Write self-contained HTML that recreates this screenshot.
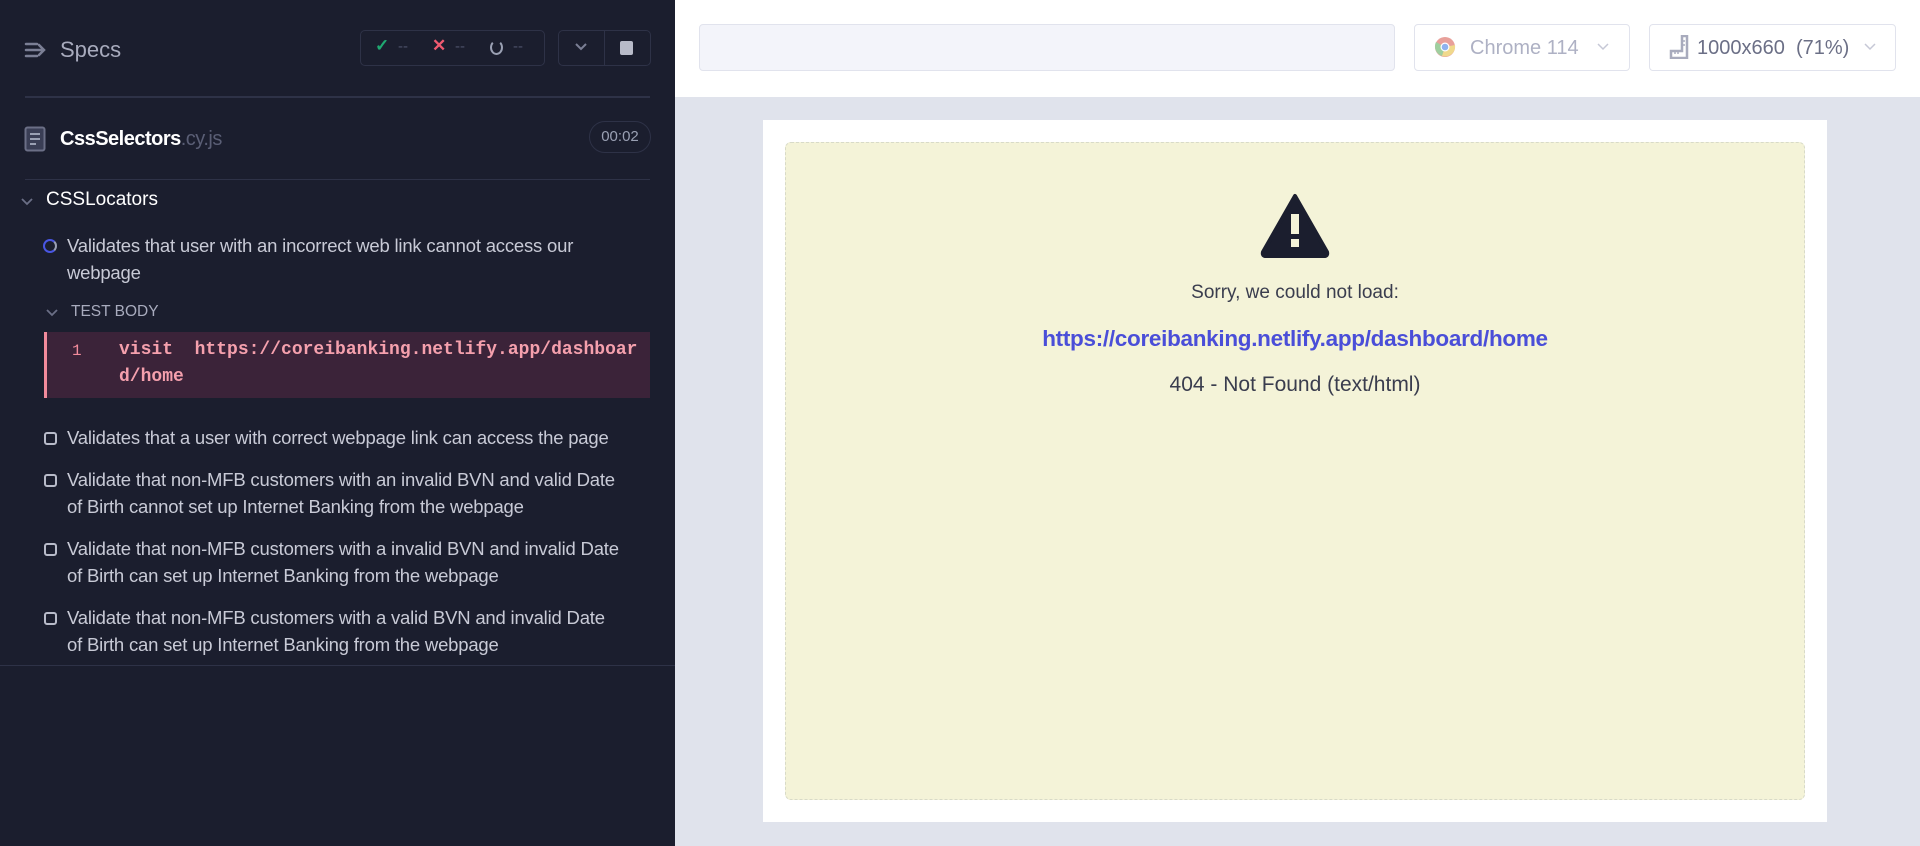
<!DOCTYPE html>
<html><head><meta charset="utf-8"><style>
*{margin:0;padding:0;box-sizing:border-box}
body{width:1920px;height:846px;overflow:hidden;font-family:"Liberation Sans",sans-serif;background:#e0e3ec;position:relative}
.a{position:absolute;white-space:nowrap}
#left{position:absolute;left:0;top:0;width:675px;height:846px;background:#1b1e2e}
.t{color:#c8cad6;font-size:18.5px;line-height:27px;letter-spacing:-0.2px}
.cb{position:absolute;width:13px;height:13px;border:2.5px solid #b8bbc9;border-radius:3px;left:44px}
</style></head><body>
<div id="left">
  <svg class="a" style="left:24px;top:41px" width="24" height="18" viewBox="0 0 24 18"><g stroke="#7b7f95" stroke-width="2.5" fill="none" stroke-linecap="round"><path d="M2 3h11M2 9h15M2 15h11M15 4l5 5-5 5"/></g></svg>
  <div class="a" style="left:60px;top:37px;font-size:22px;color:#a8abbd">Specs</div>
  <div class="a" style="left:360px;top:30px;width:185px;height:36px;border:1px solid #2e3247;border-radius:5px"></div>
  <div class="a" style="left:375px;top:36px;font-size:17px;color:#1fa971;font-weight:bold">✓</div>
  <div class="a" style="left:398px;top:38px;font-size:15px;color:#4e526a">--</div>
  <div class="a" style="left:432px;top:36px;font-size:17px;color:#f05a70;font-weight:bold">✕</div>
  <div class="a" style="left:455px;top:38px;font-size:15px;color:#4e526a">--</div>
  <div class="a" style="left:490px;top:40px;width:13px;height:15px;border:2.5px solid #9aa0b3;border-radius:50%;border-top-color:transparent"></div>
  <div class="a" style="left:513px;top:38px;font-size:15px;color:#4e526a">--</div>
  <div class="a" style="left:558px;top:30px;width:93px;height:36px;border:1px solid #2e3247;border-radius:5px"></div>
  <div class="a" style="left:604px;top:31px;width:1px;height:34px;background:#2e3247"></div>
  <svg class="a" style="left:574px;top:42px" width="14" height="10"><path d="M2 2l5 5 5-5" stroke="#7b7f95" stroke-width="2" fill="none"/></svg>
  <div class="a" style="left:620px;top:41px;width:13px;height:14px;background:#b8bbc9;border-radius:2px"></div>
  <div class="a" style="left:25px;top:96px;width:625px;height:2px;background:#2e3247"></div>
  <svg class="a" style="left:24px;top:126px" width="22" height="26" viewBox="0 0 22 26"><rect x="1.5" y="1.5" width="19" height="23" rx="2" fill="#3a3e55" stroke="#6b6f86" stroke-width="2"/><path d="M6 8h10M6 13h10M6 18h6" stroke="#9aa0b3" stroke-width="2"/></svg>
  <div class="a" style="left:60px;top:128px;font-size:20px;color:#fff;font-weight:bold;letter-spacing:-0.5px">CssSelectors<span style="font-weight:normal;color:#5a5e75">.cy.js</span></div>
  <div class="a" style="left:589px;top:121px;width:62px;height:32px;border:1px solid #2e3247;border-radius:16px;color:#9aa0b3;font-size:15px;text-align:center;line-height:30px">00:02</div>
  <div class="a" style="left:25px;top:179px;width:625px;height:1px;background:#2e3247"></div>
  <svg class="a" style="left:21px;top:198px" width="12" height="8"><path d="M1 1l5 5 5-5" stroke="#6b6f86" stroke-width="1.8" fill="none"/></svg>
  <div class="a" style="left:46px;top:189px;font-size:19px;color:#fff">CSSLocators</div>
  <div class="a" style="left:43px;top:239px;width:14px;height:14px;border:2.5px solid #4956e3;border-radius:50%;border-right-color:#9aa0b3"></div>
  <div class="a t" style="left:67px;top:232px">Validates that user with an incorrect web link cannot access our<br>webpage</div>
  <svg class="a" style="left:46px;top:309px" width="12" height="8"><path d="M1 1l5 5 5-5" stroke="#6b6f86" stroke-width="1.8" fill="none"/></svg>
  <div class="a" style="left:71px;top:303px;font-size:15.5px;color:#a8abbd">TEST BODY</div>
  <div class="a" style="left:44px;top:332px;width:606px;height:66px;background:#3b2339;border-left:3px solid #f28b9c"></div>
  <div class="a" style="left:72px;top:338px;font-family:'Liberation Mono',monospace;font-size:16px;color:#f28b9c;line-height:27px">1</div>
  <div class="a" style="left:119px;top:337px;font-family:'Liberation Mono',monospace;font-size:18px;font-weight:bold;color:#f5a0ad;line-height:27px">visit&nbsp;&nbsp;https://coreibanking.netlify.app/dashboar<br>d/home</div>
  <div class="cb" style="top:432px"></div>
  <div class="a t" style="left:67px;top:424px">Validates that a user with correct webpage link can access the page</div>
  <div class="cb" style="top:474px"></div>
  <div class="a t" style="left:67px;top:466px">Validate that non-MFB customers with an invalid BVN and valid Date<br>of Birth cannot set up Internet Banking from the webpage</div>
  <div class="cb" style="top:543px"></div>
  <div class="a t" style="left:67px;top:535px">Validate that non-MFB customers with a invalid BVN and invalid Date<br>of Birth can set up Internet Banking from the webpage</div>
  <div class="cb" style="top:612px"></div>
  <div class="a t" style="left:67px;top:604px">Validate that non-MFB customers with a valid BVN and invalid Date<br>of Birth can set up Internet Banking from the webpage</div>
  <div class="a" style="left:0;top:665px;width:675px;height:1px;background:#2e3247"></div>
</div>
<div class="a" style="left:675px;top:0;width:1245px;height:97px;background:#fff"></div>
<div class="a" style="left:699px;top:24px;width:696px;height:47px;background:#f3f4fa;border:1px solid #e1e3ed;border-radius:4px"></div>
<div class="a" style="left:1414px;top:24px;width:216px;height:47px;background:#fff;border:1px solid #e1e3ed;border-radius:4px"></div>
<svg class="a" style="left:1434px;top:36px" width="22" height="22" viewBox="0 0 22 22"><circle cx="11" cy="11" r="10" fill="#e8a09a"/><path d="M11 11L2 6A10 10 0 0 0 8 20z" fill="#9fcf9f"/><path d="M11 11L8 20A10 10 0 0 0 21 9z" fill="#f0d98c"/><circle cx="11" cy="11" r="4.5" fill="#fff"/><circle cx="11" cy="11" r="3.3" fill="#8fb2ee"/></svg>
<div class="a" style="left:1470px;top:37px;font-size:20px;color:#aeb1c4">Chrome 114</div>
<svg class="a" style="left:1597px;top:43px" width="12" height="8"><path d="M1 1l5 5 5-5" stroke="#c6c8d6" stroke-width="1.5" fill="none"/></svg>
<div class="a" style="left:1649px;top:24px;width:247px;height:47px;background:#fff;border:1px solid #e1e3ed;border-radius:4px"></div>
<svg class="a" style="left:1669px;top:35px" width="20" height="24" viewBox="0 0 20 24"><path d="M13 1h5v22H2v-7h11z" fill="none" stroke="#a8abbd" stroke-width="2.5"/><path d="M6 16v3M9 16v3M13 6h3M13 10h3" stroke="#a8abbd" stroke-width="1.5"/></svg>
<div class="a" style="left:1697px;top:37px;font-size:20px;color:#6b6f86">1000x660&nbsp; (71%)</div>
<svg class="a" style="left:1864px;top:43px" width="12" height="8"><path d="M1 1l5 5 5-5" stroke="#c6c8d6" stroke-width="1.5" fill="none"/></svg>
<div class="a" style="left:763px;top:120px;width:1064px;height:702px;background:#fff"></div>
<div class="a" style="left:785px;top:142px;width:1020px;height:658px;background:#f4f3d8;border:1.5px dashed #d8dac8;border-radius:6px"></div>
<svg class="a" style="left:1260px;top:192px" width="70" height="67" viewBox="0 0 70 67"><path d="M35 4 L67 60 Q68 64 64 64 H6 Q2 64 3 60 Z" fill="#1b1e2e" stroke="#1b1e2e" stroke-width="4" stroke-linejoin="round"/><rect x="31" y="22" width="8" height="20" fill="#f4f3d8"/><rect x="31" y="47" width="8" height="8" fill="#f4f3d8"/></svg>
<div class="a" style="left:785px;width:1020px;top:282px;text-align:center;font-size:19px;color:#3a3d4e">Sorry, we could not load:</div>
<div class="a" style="left:785px;width:1020px;top:326px;text-align:center;font-size:22.5px;font-weight:bold;color:#4a4ed8;letter-spacing:-0.3px">https://coreibanking.netlify.app/dashboard/home</div>
<div class="a" style="left:785px;width:1020px;top:373px;text-align:center;font-size:21px;color:#3a3d4e">404 - Not Found (text/html)</div>
</body></html>
